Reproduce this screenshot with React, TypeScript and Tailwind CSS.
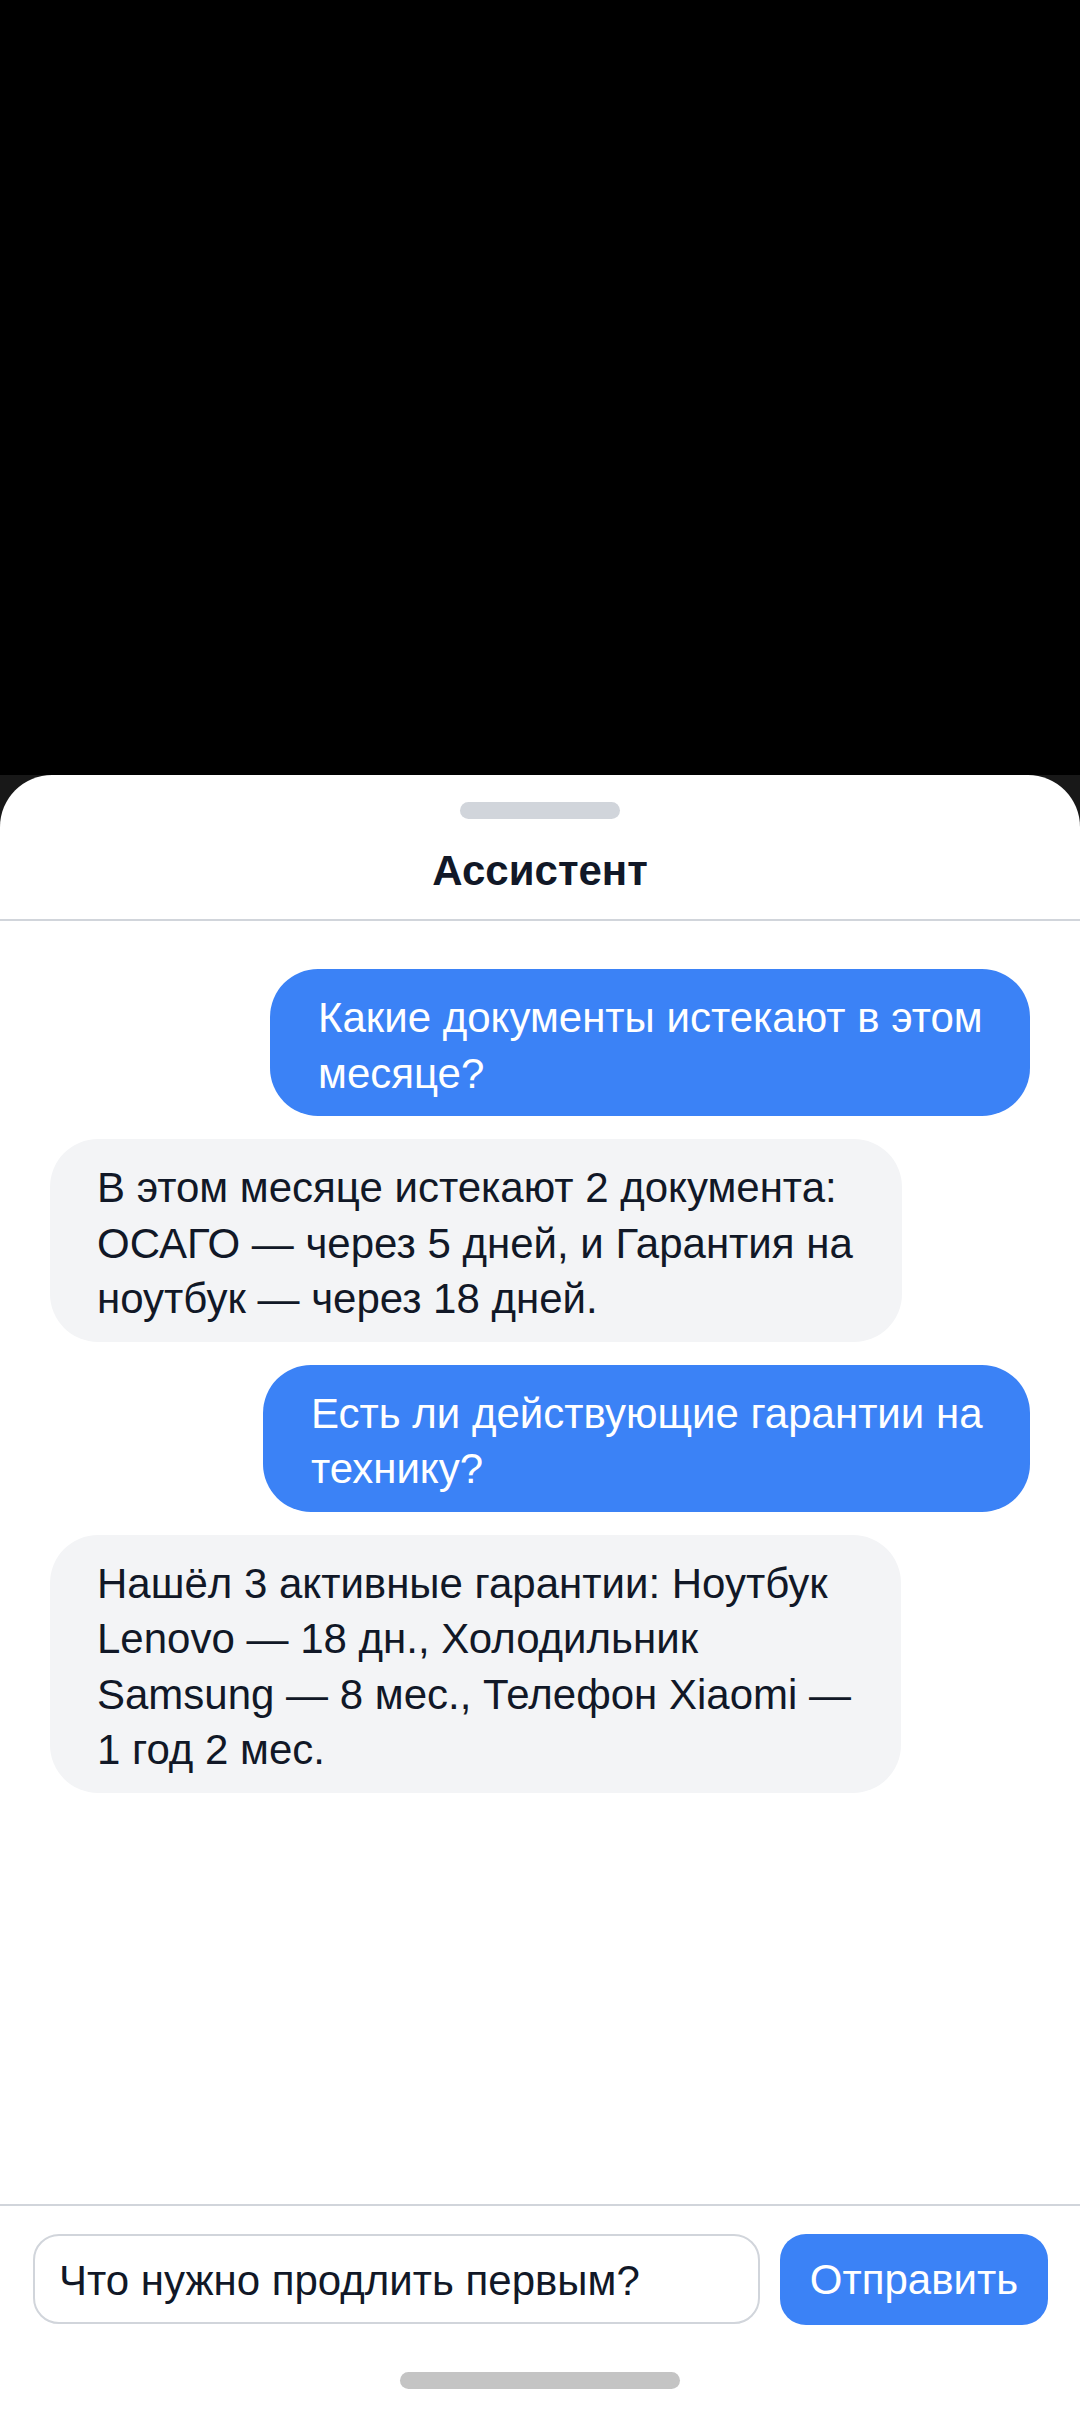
import React from "react";

const userBubble =
  "self-end rounded-[48px] bg-[#3b82f6] pl-[48px] pr-[30px] pt-[21px] pb-[15px] text-white";
const botBubble =
  "self-start rounded-[48px] bg-[#f3f4f6] pl-[47px] pr-[30px] pt-[21px] pb-[15px] text-[#111827]";

function Lines({ lines }: { lines: string[] }) {
  return (
    <>
      {lines.map((l, i) => (
        <span key={i} className="block whitespace-nowrap">
          {l}
        </span>
      ))}
    </>
  );
}

export default function App() {
  return (
    <div className="flex h-[2424px] w-[1080px] flex-col bg-black font-['Liberation_Sans',Arial,sans-serif]">
      <div className="h-[775px] shrink-0 bg-black" />
      <div className="flex flex-1 flex-col bg-[#181818]">
        <div className="flex flex-1 flex-col rounded-t-[52px] bg-white">
          {/* header */}
          <div className="flex flex-col items-center border-b-2 border-[#d1d5db] pt-[27px] pb-[21px]">
            <div className="h-[17px] w-[160px] rounded-full bg-[#d1d5db]" />
            <div className="mt-[25px] text-[42px] font-bold leading-[54px] text-[#111827]">
              Ассистент
            </div>
          </div>

          {/* messages */}
          <div className="flex flex-1 flex-col gap-[23px] pl-[50px] pr-[50px] pt-[48px] text-[42px] leading-[55.5px]">
            <div className={`${userBubble} w-[760px]`}>
              <Lines lines={["Какие документы истекают в этом", "месяце?"]} />
            </div>
            <div className={`${botBubble} w-[852px]`}>
              <Lines
                lines={[
                  "В этом месяце истекают 2 документа:",
                  "ОСАГО — через 5 дней, и Гарантия на",
                  "ноутбук — через 18 дней.",
                ]}
              />
            </div>
            <div className={`${userBubble} w-[767px]`}>
              <Lines lines={["Есть ли действующие гарантии на", "технику?"]} />
            </div>
            <div className={`${botBubble} w-[851px]`}>
              <Lines
                lines={[
                  "Нашёл 3 активные гарантии: Ноутбук",
                  "Lenovo — 18 дн., Холодильник",
                  "Samsung — 8 мес., Телефон Xiaomi —",
                  "1 год 2 мес.",
                ]}
              />
            </div>
          </div>

          {/* footer */}
          <div className="flex flex-col items-center border-t-2 border-[#d1d5db] pt-[28px] pb-[35px]">
            <div className="flex w-full gap-[20px] pl-[33px] pr-[32px]">
              <div className="flex h-[90px] flex-1 items-center rounded-[26px] border-2 border-[#d1d5db] bg-white pl-[24px] pt-[2px] text-[42px] text-[#111827]">
                Что нужно продлить первым?
              </div>
              <div className="flex h-[91px] w-[268px] items-center justify-center rounded-[26px] bg-[#3b82f6] text-[42px] text-white">
                Отправить
              </div>
            </div>
            <div className="mt-[47px] h-[17px] w-[280px] rounded-full bg-[#c4c4c4]" />
          </div>
        </div>
      </div>
    </div>
  );
}
